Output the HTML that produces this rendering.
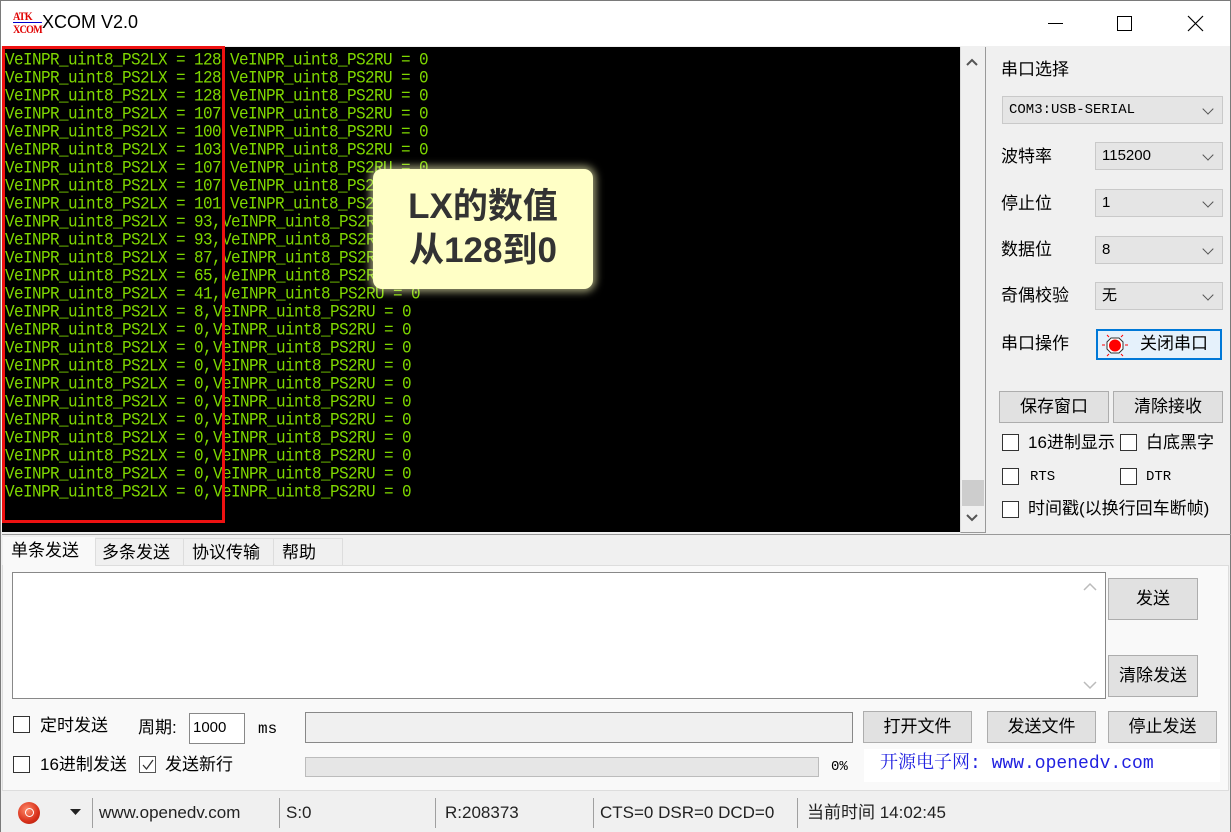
<!DOCTYPE html>
<html><head><meta charset="utf-8">
<style>
*{margin:0;padding:0;box-sizing:border-box}
body{width:1231px;height:832px;overflow:hidden;background:#f0f0f0;font-family:"Liberation Sans","Noto Sans CJK SC",sans-serif;position:relative;font-size:16px;color:#000}
.a{position:absolute}
.term{left:2px;top:47px;width:958px;height:485px;background:#000}
.ln{position:absolute;left:5px;height:18px;line-height:18px;font-family:"Liberation Mono","Noto Sans CJK SC",monospace;font-size:16px;letter-spacing:-0.6px;color:#7fd800;white-space:pre;transform:scaleY(1.1);transform-origin:0 50%}
.ln span{position:absolute;top:0}
.cb{position:absolute;height:28px;background:#e5e5e5;border:1px solid #c9c9c9;font-size:15px;line-height:26px;padding-left:6px}
.cb:after{content:"";position:absolute;right:10px;top:8px;width:7px;height:7px;border-right:1.5px solid #555;border-bottom:1.5px solid #555;transform:rotate(45deg)}
.btn{position:absolute;background:#e1e1e1;border:1px solid #adadad;text-align:center;font-size:17px}
.chk{position:absolute;width:17px;height:17px;border:1.5px solid #333;background:#fff}
.lbl{position:absolute;font-size:17px;white-space:nowrap;line-height:20px;height:20px}
.sep{position:absolute;top:798px;width:1px;height:30px;background:#a0a0a0}
</style></head><body>
<div class="a" style="left:0;top:0;width:1231px;height:46px;background:#fff;border:1px solid #7a7a7a;border-bottom:none"></div>
<div class="a" style="left:13px;top:10px;font-family:'Liberation Serif',serif;font-weight:bold;font-size:12px;color:#e00000;line-height:12px;letter-spacing:-1px;transform:scaleX(0.85);transform-origin:0 0">ATK<br><span style="display:inline-block;border-top:1px solid #00c">XCOM</span></div>
<div class="a" style="left:42px;top:12px;font-size:18px">XCOM V2.0</div>
<div class="a" style="left:1048px;top:23px;width:15px;height:1px;background:#000"></div>
<div class="a" style="left:1117px;top:16px;width:15px;height:15px;border:1px solid #000"></div>
<svg class="a" style="left:1187px;top:15px" width="17" height="17"><path d="M1 1L16 16M16 1L1 16" stroke="#000" stroke-width="1.2"/></svg>
<div class="a" style="left:0;top:46px;width:1px;height:786px;background:#7a7a7a"></div>
<div class="a" style="left:1230px;top:46px;width:1px;height:786px;background:#7a7a7a"></div>

<div class="a term"></div>
<div class="a" style="left:960px;top:47px;width:26px;height:486px;background:#f0f0f0;border-left:1px solid #ddd;border-right:1px solid #999;border-bottom:1px solid #999"></div>
<svg class="a" style="left:964px;top:56px" width="16" height="12"><path d="M3 9L8 4L13 9" stroke="#555" stroke-width="2" fill="none"/></svg>
<div class="a" style="left:962px;top:480px;width:22px;height:26px;background:#cdcdcd"></div>
<svg class="a" style="left:964px;top:512px" width="16" height="12"><path d="M3 3L8 8L13 3" stroke="#555" stroke-width="2" fill="none"/></svg>

<div class="ln" style="top:51px">VeINPR_uint8_PS2LX = 128<span style="left:225px">VeINPR_uint8_PS2RU = 0</span></div>
<div class="ln" style="top:69px">VeINPR_uint8_PS2LX = 128<span style="left:225px">VeINPR_uint8_PS2RU = 0</span></div>
<div class="ln" style="top:87px">VeINPR_uint8_PS2LX = 128<span style="left:225px">VeINPR_uint8_PS2RU = 0</span></div>
<div class="ln" style="top:105px">VeINPR_uint8_PS2LX = 107<span style="left:225px">VeINPR_uint8_PS2RU = 0</span></div>
<div class="ln" style="top:123px">VeINPR_uint8_PS2LX = 100<span style="left:225px">VeINPR_uint8_PS2RU = 0</span></div>
<div class="ln" style="top:141px">VeINPR_uint8_PS2LX = 103<span style="left:225px">VeINPR_uint8_PS2RU = 0</span></div>
<div class="ln" style="top:159px">VeINPR_uint8_PS2LX = 107<span style="left:225px">VeINPR_uint8_PS2RU = 0</span></div>
<div class="ln" style="top:177px">VeINPR_uint8_PS2LX = 107<span style="left:225px">VeINPR_uint8_PS2RU = 0</span></div>
<div class="ln" style="top:195px">VeINPR_uint8_PS2LX = 101<span style="left:225px">VeINPR_uint8_PS2RU = 0</span></div>
<div class="ln" style="top:213px">VeINPR_uint8_PS2LX = 93,<span style="left:217px">VeINPR_uint8_PS2RU = 0</span></div>
<div class="ln" style="top:231px">VeINPR_uint8_PS2LX = 93,<span style="left:217px">VeINPR_uint8_PS2RU = 0</span></div>
<div class="ln" style="top:249px">VeINPR_uint8_PS2LX = 87,<span style="left:217px">VeINPR_uint8_PS2RU = 0</span></div>
<div class="ln" style="top:267px">VeINPR_uint8_PS2LX = 65,<span style="left:217px">VeINPR_uint8_PS2RU = 0</span></div>
<div class="ln" style="top:285px">VeINPR_uint8_PS2LX = 41,<span style="left:217px">VeINPR_uint8_PS2RU = 0</span></div>
<div class="ln" style="top:303px">VeINPR_uint8_PS2LX = 8,<span style="left:208px">VeINPR_uint8_PS2RU = 0</span></div>
<div class="ln" style="top:321px">VeINPR_uint8_PS2LX = 0,<span style="left:208px">VeINPR_uint8_PS2RU = 0</span></div>
<div class="ln" style="top:339px">VeINPR_uint8_PS2LX = 0,<span style="left:208px">VeINPR_uint8_PS2RU = 0</span></div>
<div class="ln" style="top:357px">VeINPR_uint8_PS2LX = 0,<span style="left:208px">VeINPR_uint8_PS2RU = 0</span></div>
<div class="ln" style="top:375px">VeINPR_uint8_PS2LX = 0,<span style="left:208px">VeINPR_uint8_PS2RU = 0</span></div>
<div class="ln" style="top:393px">VeINPR_uint8_PS2LX = 0,<span style="left:208px">VeINPR_uint8_PS2RU = 0</span></div>
<div class="ln" style="top:411px">VeINPR_uint8_PS2LX = 0,<span style="left:208px">VeINPR_uint8_PS2RU = 0</span></div>
<div class="ln" style="top:429px">VeINPR_uint8_PS2LX = 0,<span style="left:208px">VeINPR_uint8_PS2RU = 0</span></div>
<div class="ln" style="top:447px">VeINPR_uint8_PS2LX = 0,<span style="left:208px">VeINPR_uint8_PS2RU = 0</span></div>
<div class="ln" style="top:465px">VeINPR_uint8_PS2LX = 0,<span style="left:208px">VeINPR_uint8_PS2RU = 0</span></div>
<div class="ln" style="top:483px">VeINPR_uint8_PS2LX = 0,<span style="left:208px">VeINPR_uint8_PS2RU = 0</span></div>

<div class="a" style="left:2px;top:46px;width:223px;height:477px;border:3px solid #ee1111"></div>

<div class="a" style="left:373px;top:169px;width:220px;height:120px;background:#ffffc6;border-radius:9px;box-shadow:0 0 8px 3px rgba(255,255,190,0.6);text-align:center;font-size:35px;font-weight:bold;color:#333;line-height:44px;padding-top:16px;white-space:nowrap">LX的数值<br>从128到0</div>

<!-- right panel -->
<div class="lbl" style="left:1001px;top:60px">串口选择</div>
<div class="cb" style="left:1002px;top:96px;width:221px;font-family:'Liberation Mono',monospace;font-size:14px">COM3:USB-SERIAL</div>
<div class="lbl" style="left:1001px;top:147px">波特率</div>
<div class="cb" style="left:1095px;top:142px;width:128px">115200</div>
<div class="lbl" style="left:1001px;top:194px">停止位</div>
<div class="cb" style="left:1095px;top:189px;width:128px">1</div>
<div class="lbl" style="left:1001px;top:240px">数据位</div>
<div class="cb" style="left:1095px;top:236px;width:128px">8</div>
<div class="lbl" style="left:1001px;top:286px">奇偶校验</div>
<div class="cb" style="left:1095px;top:282px;width:128px">无</div>
<div class="lbl" style="left:1001px;top:334px">串口操作</div>
<div class="a" style="left:1096px;top:329px;width:126px;height:31px;border:2px solid #0078d7;background:#e5f1fb"></div>
<svg class="a" style="left:1101px;top:332px" width="28" height="26"><polygon points="10,6 18,6 22,10 22,17 18,21 10,21 6,17 6,10" fill="#fff" stroke="#333"/><circle cx="14" cy="13.5" r="6" fill="#f00"/><path d="M1 13H4M24 13H27M6 3L8 5M22 3L20 5M6 24L8 22M22 24L20 22" stroke="#f00"/></svg>
<div class="lbl" style="left:1140px;top:334px">关闭串口</div>
<div class="btn" style="left:999px;top:391px;width:110px;height:32px;line-height:30px">保存窗口</div>
<div class="btn" style="left:1113px;top:391px;width:110px;height:32px;line-height:30px">清除接收</div>
<div class="chk" style="left:1002px;top:434px"></div><div class="lbl" style="left:1028px;top:433px">16进制显示</div>
<div class="chk" style="left:1120px;top:434px"></div><div class="lbl" style="left:1146px;top:433px">白底黑字</div>
<div class="chk" style="left:1002px;top:468px"></div><div class="lbl" style="left:1030px;top:467px;font-family:'Liberation Mono',monospace;font-size:14px">RTS</div>
<div class="chk" style="left:1120px;top:468px"></div><div class="lbl" style="left:1146px;top:467px;font-family:'Liberation Mono',monospace;font-size:14px">DTR</div>
<div class="chk" style="left:1002px;top:501px"></div><div class="lbl" style="left:1028px;top:499px">时间戳(以换行回车断帧)</div>

<!-- bottom tabs -->
<div class="a" style="left:2px;top:534px;width:1229px;height:1px;background:#999"></div>
<div class="a" style="left:2px;top:565px;width:1227px;height:226px;background:#f9f9f9;border:1px solid #ddd"></div>
<div class="a" style="left:3px;top:537px;width:92px;height:30px;background:#f9f9f9"></div>
<div class="lbl" style="left:11px;top:541px">单条发送</div>
<div class="a" style="left:95px;top:538px;width:248px;height:28px;background:#f0f0f0;border:1px solid #ddd"></div>
<div class="a" style="left:183px;top:538px;width:1px;height:28px;background:#ddd"></div>
<div class="a" style="left:273px;top:538px;width:1px;height:28px;background:#ddd"></div>
<div class="lbl" style="left:102px;top:543px">多条发送</div>
<div class="lbl" style="left:192px;top:543px">协议传输</div>
<div class="lbl" style="left:282px;top:543px">帮助</div>

<div class="a" style="left:12px;top:572px;width:1094px;height:127px;background:#fff;border:1px solid #888"></div>
<svg class="a" style="left:1080px;top:580px" width="20" height="120"><path d="M4 10L10 4L16 10" stroke="#bbb" stroke-width="1.5" fill="none"/><path d="M4 102L10 108L16 102" stroke="#bbb" stroke-width="1.5" fill="none"/></svg>
<div class="btn" style="left:1108px;top:578px;width:90px;height:42px;line-height:40px">发送</div>
<div class="btn" style="left:1108px;top:655px;width:90px;height:42px;line-height:40px">清除发送</div>

<div class="chk" style="left:13px;top:716px"></div><div class="lbl" style="left:40px;top:716px">定时发送</div>
<div class="lbl" style="left:138px;top:718px">周期:</div>
<div class="a" style="left:189px;top:713px;width:56px;height:31px;background:#fff;border:1px solid #888;font-size:15px;line-height:28px;padding-left:3px">1000</div>
<div class="lbl" style="left:258px;top:719px;font-family:'Liberation Mono',monospace;font-size:16px">ms</div>
<div class="a" style="left:305px;top:712px;width:548px;height:31px;background:#f0f0f0;border:1px solid #888"></div>
<div class="btn" style="left:863px;top:711px;width:109px;height:32px;line-height:30px">打开文件</div>
<div class="btn" style="left:987px;top:711px;width:109px;height:32px;line-height:30px">发送文件</div>
<div class="btn" style="left:1108px;top:711px;width:109px;height:32px;line-height:30px">停止发送</div>

<div class="chk" style="left:13px;top:756px"></div><div class="lbl" style="left:40px;top:755px">16进制发送</div>
<div class="chk" style="left:139px;top:756px;border-color:#555"></div>
<svg class="a" style="left:141px;top:758px" width="14" height="14"><path d="M2 7L5.5 11L12 2" stroke="#333" stroke-width="1.3" fill="none"/></svg>
<div class="lbl" style="left:165px;top:755px">发送新行</div>
<div class="a" style="left:305px;top:757px;width:514px;height:20px;background:#e6e6e6;border:1px solid #bcbcbc"></div>
<div class="lbl" style="left:831px;top:757px;font-size:14px;font-family:'Liberation Mono',monospace">0%</div>
<div class="a" style="left:864px;top:749px;width:356px;height:33px;background:#fff;color:#2020e0;font-family:'Liberation Mono','Noto Serif CJK SC',monospace;font-size:18px;line-height:30px;padding-left:16px;white-space:nowrap">开源电子网: www.openedv.com</div>

<!-- status bar -->
<div class="a" style="left:1px;top:791px;width:1229px;height:41px;background:#f0f0f0"></div>
<div class="a" style="left:18px;top:802px;width:22px;height:22px;border-radius:50%;background:radial-gradient(circle at 40% 35%,#ff8a6a,#d8301a 60%,#a01808)"></div>
<div class="a" style="left:25px;top:808px;width:9px;height:9px;border:1.5px solid #fff;border-radius:50%"></div>
<svg class="a" style="left:70px;top:808px" width="12" height="8"><path d="M0 1H11L5.5 7Z" fill="#222"/></svg>
<div class="sep" style="left:92px"></div>
<div class="lbl" style="left:99px;top:803px;color:#222">www.openedv.com</div>
<div class="sep" style="left:279px"></div>
<div class="lbl" style="left:286px;top:803px;color:#222">S:0</div>
<div class="sep" style="left:435px"></div>
<div class="lbl" style="left:445px;top:803px;color:#222">R:208373</div>
<div class="sep" style="left:593px"></div>
<div class="lbl" style="left:600px;top:803px;color:#222">CTS=0 DSR=0 DCD=0</div>
<div class="sep" style="left:797px"></div>
<div class="lbl" style="left:807px;top:803px;color:#222">当前时间 14:02:45</div>
</body></html>
